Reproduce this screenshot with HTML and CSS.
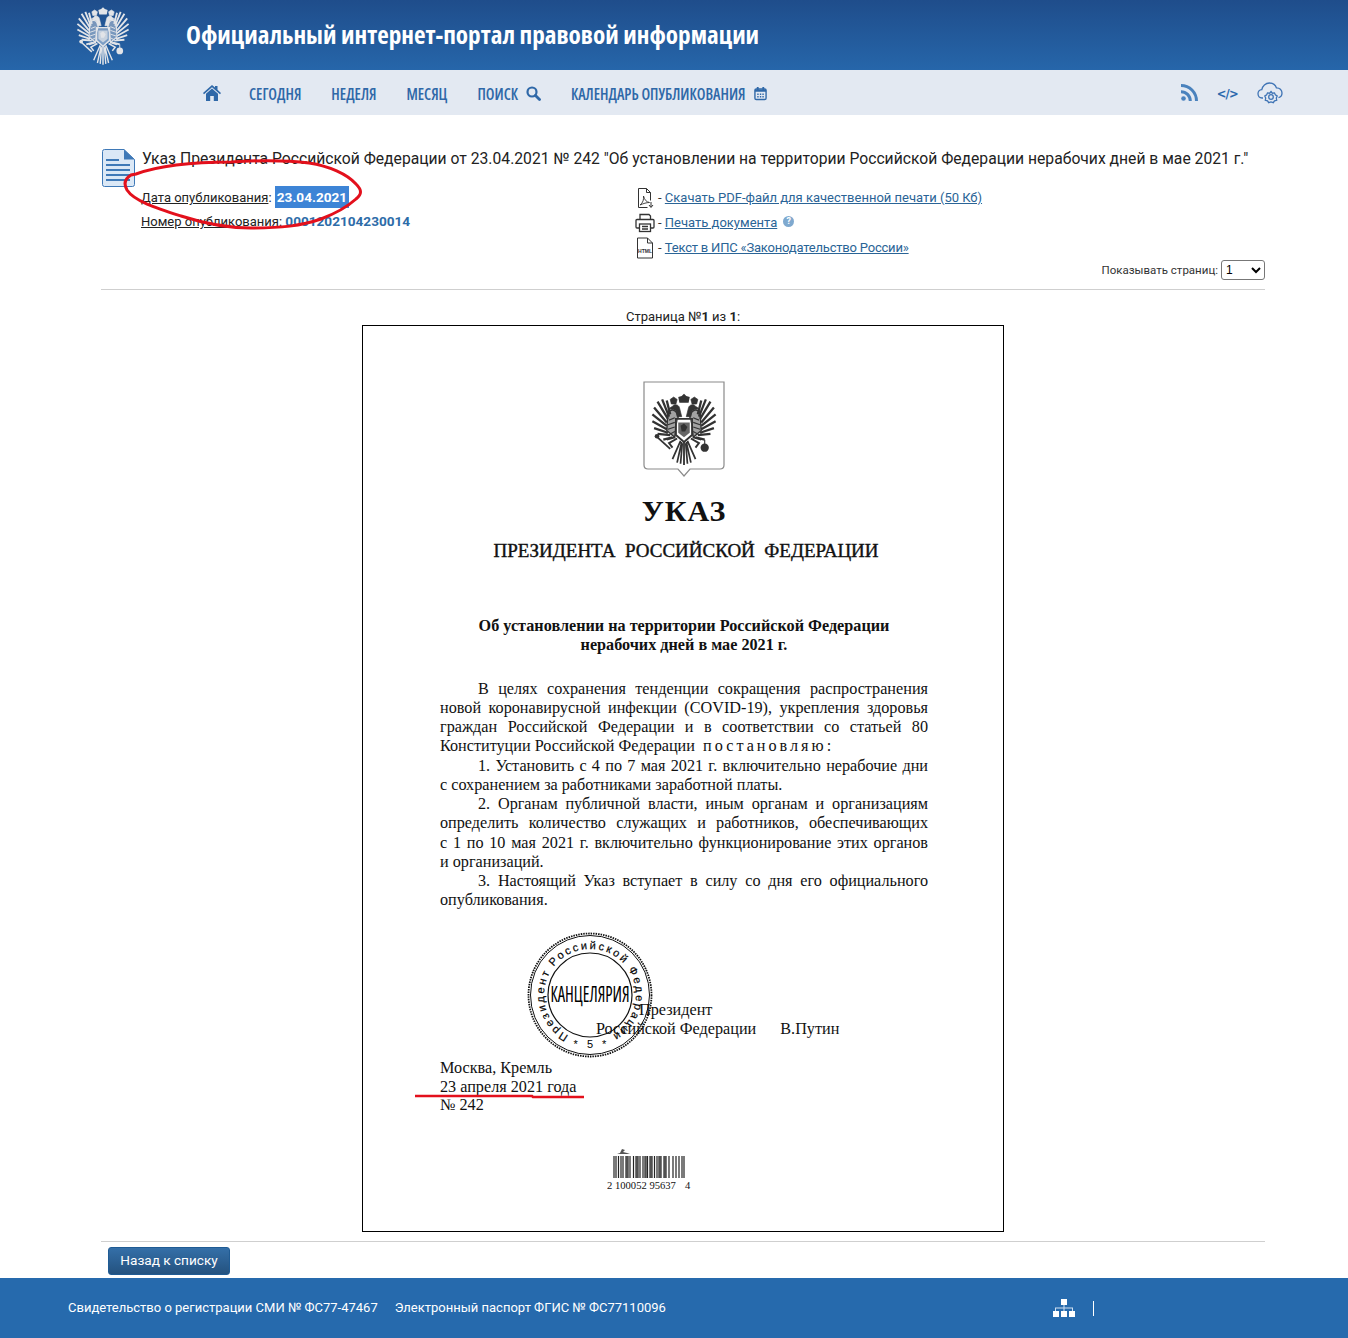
FILE: index.html
```html
<!DOCTYPE html>
<html lang="ru">
<head>
    <meta charset="UTF-8">
    <title>Официальный интернет-портал правовой информации</title>
    <link rel="stylesheet" href="styles.css">
</head>
<body>
    <svg width="0" height="0" class="defs">
        <defs>
            <g id="half-eagle" fill="none" stroke="currentColor">
                <path d="M12 -11L15 -23M13 -9L19 -24M14 -7L23 -22M15 -4L26 -17M15 -1L27.500 -11M15 2L27.500 -5M14 5L26 1M12 7L23 6M10 9L18 11" stroke-width="2"/>
                <path d="M5 -9C7 -16 12 -16 14 -12L15 3L8 9L7 -2z" fill="currentColor" fill-opacity=".45" stroke-width="1.200"/>
                <path d="M8 -8L13 -6M8 -4L14 -2M8 0L14 2M8 4L12 6" stroke-width="1"/>
                <path d="M2 -9L4 -17C5 -20 9 -20 10 -18L13 -16L9 -15L7 -14L6 -9z" fill="currentColor" stroke-width=".6"/>
                <path d="M6 -24l3-2 3 2-1 4h-4z" fill="currentColor" stroke-width=".6"/>
                <path d="M2 13L6 31M3 12L10 28M1.500 14L3 32" stroke-width="1.500"/>
                <path d="M6 10L13 14L10 18M8 9L15 11" stroke-width="1.700"/>
            </g>
            <g id="eagle">
                <use href="#half-eagle"/>
                <use href="#half-eagle" transform="scale(-1 1)"/>
                <path d="M0 -29l2 2 3 1-1 5h-8l-1-5 3-1z" fill="currentColor"/>
                <path d="M-7 -7H7V7L0 13L-7 7Z" fill="#fff" fill-opacity=".4" stroke="currentColor" stroke-width="1.600"/>
                <path d="M-5 -4H5V5L0 9L-5 5Z" fill="currentColor" fill-opacity=".75"/>
                <path d="M-3 -1l3-2 3 3-2 4h-3z" fill="currentColor"/>
                <path d="M0 13V33" stroke="currentColor" stroke-width="1.600"/>
                <path d="M-23 9L-12 19" stroke="currentColor" stroke-width="1.600"/>
                <circle cx="-23.500" cy="8" r="2" fill="currentColor"/>
                <circle cx="18" cy="18" r="3.600" fill="currentColor"/>
                <path d="M18 11v4" stroke="currentColor"/>
            </g>
        </defs>
    </svg>

    <header class="top">
        <svg class="top-eagle" viewBox="-29 -30 58 64" width="54" height="60"><use href="#eagle"/></svg>
        <div class="site-title">Официальный интернет-портал правовой информации</div>
    </header>

    <nav class="nav">
        <div class="nav-left">
            <a class="home" href="#"><svg viewBox="0 0 18 16" width="18" height="16"><path d="M9 0l3 2.600V1h2.500v3.800L18 8l-1 1.200-8-7-8 7L0 8z"/><path d="M9 3.500l6 5.200V16h-4.200v-5H7.200v5H3V8.700z"/></svg></a>
            <a href="#">СЕГОДНЯ</a>
            <a href="#">НЕДЕЛЯ</a>
            <a href="#">МЕСЯЦ</a>
            <a href="#" class="with-icon">ПОИСК <svg viewBox="0 0 15 15" width="15" height="15"><circle cx="6" cy="6" r="4.500" fill="none" stroke="currentColor" stroke-width="2.200"/><path d="M9.500 9.500l4 4" stroke="currentColor" stroke-width="2.800" stroke-linecap="round"/></svg></a>
            <a href="#" class="with-icon">КАЛЕНДАРЬ ОПУБЛИКОВАНИЯ <svg viewBox="0 0 14 15" width="13" height="15"><rect x="1" y="2.500" width="12" height="11.500" rx="1.500" fill="none" stroke="currentColor" stroke-width="1.500"/><path d="M1 3h12v2.500H1zM3 .5h2v3H3zM9 .5h2v3H9zM3.500 7.500h1.500V9H3.500zM6.300 7.500h1.500V9H6.300zM9 7.500h1.500V9H9zM3.500 10.300h1.500v1.500H3.500zM6.300 10.300h1.500v1.500H6.300zM9 10.300h1.500v1.500H9z"/></svg></a>
        </div>
        <div class="nav-right">
            <svg viewBox="0 0 17 17" width="17" height="17"><circle cx="2.500" cy="14.500" r="2.300" fill="#4a82bd"/><path d="M0 6.200a10.800 10.800 0 0 1 10.800 10.800h-3A7.800 7.800 0 0 0 0 9.200zM0 0a17 17 0 0 1 17 17h-3A14 14 0 0 0 0 3z" fill="#4a82bd"/></svg>
            <span class="code-tag">&lt;/&gt;</span>
            <svg viewBox="0 0 26 24" width="26" height="24" fill="none" stroke="#3f74b5" stroke-width="1.300"><path d="M6 17H5C2.500 17 1 15 1 12.800c0-2.200 1.600-4 3.800-4.200C5.400 5 8.600 2 12.400 2c3.300 0 6 2 7 4.800 3.200-.2 5.600 2.200 5.600 5.200 0 2.500-1.600 4.200-3.500 4.700"/><circle cx="14" cy="16" r="2.300"/><path d="M14 10.500l1.300 1.700 2.200-.3.900 2 1.800 1.200-.9 2 .4 2.200-2.200.6-1.200 1.800-2.300-.7-2.300.7-1.200-1.800-2.200-.6.400-2.200-.9-2 1.800-1.200.9-2 2.200.3z"/></svg>
        </div>
    </nav>

    <main class="main">
        <div class="doc-head">
            <svg class="doc-icon" viewBox="0 0 34 38" width="34" height="38"><path d="M1.500 2.500a2 2 0 0 1 2-2H23l10.500 10v25a2 2 0 0 1-2 2h-28a2 2 0 0 1-2-2z" fill="#dbe8f6" stroke="#3f79b7"/><path d="M23 .5v10h10.500z" fill="#3f79b7"/><path d="M5 10h13v2H5zM5 15h24v2H5zM5 20h24v2H5zM5 25h24v2H5zM5 30h24v2H5z" fill="#3f79b7"/></svg>
            <div class="doc-title">Указ Президента Российской Федерации от 23.04.2021 № 242 "Об установлении на территории Российской Федерации нерабочих дней в мае 2021 г."</div>
        </div>

        <div class="doc-meta">
            <div class="meta-left">
                <div class="meta-row meta-date"><a href="#">Дата опубликования</a>: <b class="date-mark">23.04.2021</b></div>
                <div class="meta-row"><a href="#">Номер опубликования</a>: <b class="pub-num">0001202104230014</b></div>
            </div>
            <div class="meta-right">
                <div class="link-row">
                    <svg viewBox="0 0 20 22" width="20" height="22" fill="none" stroke="#333"><path d="M3.500 20.500V1.500h8l4 4v8M11.500 1.500v4h4M3.500 20.500h9"/><path d="M5 18c3-2 4-6 3.500-9 1 4 3 6 6 6.500-3 0-6 1-9.500 2.500z" stroke-width=".9"/><path d="M16 15v5M14 18l2 2.500 2-2.500" stroke-width="1"/></svg>
                    <span>- <a href="#">Скачать PDF-файл для качественной печати (50 Кб)</a></span>
                </div>
                <div class="link-row">
                    <svg viewBox="0 0 20 20" width="20" height="20" fill="none" stroke="#333" stroke-width="1.300"><path d="M5 6V1.500h9l1.500 1.500v3M4.500 15H2a1 1 0 0 1-1-1V7.500a1 1 0 0 1 1-1h16a1 1 0 0 1 1 1V14a1 1 0 0 1-1 1h-2.500"/><rect x="4.500" y="11" width="11" height="7.500"/><path d="M7 13.500h6M7 16h6"/></svg>
                    <span>- <a href="#">Печать документа</a></span>
                    <i class="help">?</i>
                </div>
                <div class="link-row">
                    <svg viewBox="0 0 20 22" width="20" height="22" fill="none" stroke="#333"><path d="M2.500 21V1h10l5 5v15zM12.500 1v5h5"/><text x="10" y="15.500" class="html-label">HTML</text></svg>
                    <span>- <a href="#" class="ips-link">Текст в ИПС «Законодательство России»</a></span>
                </div>
            </div>
        </div>

        <div class="pages-row">
            <label>Показывать страниц:</label>
            <select class="pages-select"><option>1</option></select>
        </div>

        <div class="page-no">Страница №<b>1</b> из <b>1</b>:</div>

        <div class="paper">
            <svg class="emblem" viewBox="0 0 82 98" width="82" height="98">
                <path d="M1 1h80v83c0 3-2 4-4 4H47l-6 7-6-7H5c-2 0-4-1-4-4z" fill="#fff" stroke="#8a8a8a" stroke-width="1.200"/>
                <g transform="translate(41 46) scale(1.150)"><use href="#eagle"/></g>
            </svg>
            <div class="ukaz">УКАЗ</div>
            <div class="ukaz-sub">ПРЕЗИДЕНТА&nbsp; РОССИЙСКОЙ&nbsp; ФЕДЕРАЦИИ</div>
            <div class="decree-title">
                <div>Об установлении на территории Российской Федерации</div>
                <div>нерабочих дней в мае 2021 г.</div>
            </div>
            <div class="decree-body">
                <div class="ln in">В целях сохранения тенденции сокращения распространения</div>
                <div class="ln">новой коронавирусной инфекции (COVID-19), укрепления здоровья</div>
                <div class="ln">граждан Российской Федерации и в соответствии со статьей 80</div>
                <div class="ln end">Конституции Российской Федерации&nbsp; <span class="spaced">постановляю</span>:</div>
                <div class="ln in">1. Установить с 4 по 7 мая 2021 г. включительно нерабочие дни</div>
                <div class="ln end">с сохранением за работниками заработной платы.</div>
                <div class="ln in">2. Органам публичной власти, иным органам и организациям</div>
                <div class="ln">определить количество служащих и работников, обеспечивающих</div>
                <div class="ln">с 1 по 10 мая 2021 г. включительно функционирование этих органов</div>
                <div class="ln end">и организаций.</div>
                <div class="ln in">3. Настоящий Указ вступает в силу со дня его официального</div>
                <div class="ln end">опубликования.</div>
            </div>
            <div class="signature">
                <div class="sign-post">
                    <div class="sign-first">Президент</div>
                    <div>Российской Федерации</div>
                </div>
                <div class="sign-name">В.Путин</div>
                <svg class="stamp" viewBox="0 0 126 126" width="126" height="126">
                    <circle cx="63" cy="63" r="61.500" fill="none" stroke="#111" stroke-width="1.800" stroke-dasharray="1.500 1"/>
                    <circle cx="63" cy="63" r="59.500" fill="none" stroke="#111"/>
                    <circle cx="63" cy="63" r="42" fill="none" stroke="#111" stroke-width="1.200"/>
                    <path id="stampRing" d="M41.400 103.600A46 46 0 1 1 82.400 104.700" fill="none"/>
                    <text class="stamp-ring"><textPath href="#stampRing" textLength="242">Президент Российской Федерации</textPath></text>
                    <text x="63" y="116" class="stamp-star">* 5 *</text>
                    <text x="63" y="70" class="stamp-title" textLength="79" lengthAdjust="spacingAndGlyphs">КАНЦЕЛЯРИЯ</text>
                </svg>
            </div>
            <div class="place">
                <div>Москва, Кремль</div>
                <div>23 апреля 2021 года</div>
                <div>№ 242</div>
            </div>
            <svg class="barcode" viewBox="0 0 84 46" width="84" height="46">
                <path d="M10 8l3-1 2-4 3 1-2 2 4 1 3 1H8z" fill="#555"/>
                <path d="M7 10v22M9 10v22M11.500 10v22M14 10v22M16 10v22M19 10v22M21 10v22M23 10v22M26.500 10v22M29 10v22M31 10v22M33 10v22M36 10v22M38 10v22M40.500 10v22M43 10v22M45 10v22M47.500 10v22M50 10v22M52 10v22M54 10v22M57 10v22M59 10v22M62 10v22M66 10v22M69 10v22M72 10v22M75 10v22M77 10v22" stroke="#222" stroke-width="1.200"/>
                <path d="M20 10v22M30 10v22M39 10v22M44 10v22M53 10v22M58 10v22" stroke="#444" stroke-width="1.500"/>
                <text x="0" y="43" class="barcode-num">2 100052 95637</text>
                <text x="78" y="43" class="barcode-num">4</text>
            </svg>
        </div>

        <div class="bottom-bar">
            <a class="back-btn" href="#">Назад к списку</a>
        </div>
    </main>

    <footer class="footer">
        <div class="footer-text">
            <span>Свидетельство о регистрации СМИ № ФС77-47467</span>
            <span>Электронный паспорт ФГИС № ФС77110096</span>
        </div>
        <div class="footer-icons">
            <svg viewBox="0 0 22 18" width="22" height="18" fill="#fff"><rect x="8" y="0" width="6" height="6"/><rect x="0" y="12" width="6" height="6"/><rect x="8" y="12" width="6" height="6"/><rect x="16" y="12" width="6" height="6"/><path d="M10.500 6h1v2.500H20V12h-1V9.500h-7.500V12h-1V9.500H3V12H2V8.500h8.500z" fill="#cfe0f2"/></svg>
            <span class="footer-sep"></span>
        </div>
    </footer>

    <svg class="marks" viewBox="0 0 1348 1338" width="1348" height="1338" fill="none" stroke="#e3101c">
        <path stroke-width="3" d="M136 174c22-8 55-12 95-12 30-2 55-2 78 1 20 3 38 11 47 21 6 6 6 10 0 15-10 9-22 15-35 20-20 7-40 9-70 9-25 0-45-4-70-12-25-8-47-15-54-26-4-7-1-12 4-15z"/>
        <path stroke-width="2.500" d="M415 1096h117l1 1h51"/>
    </svg>
</body>
</html>
```
FILE: styles.css
```css
* {
    box-sizing: border-box;
}

body {
    margin: 0;
    width: 1348px;
    height: 1338px;
    overflow: hidden;
    position: relative;
    background: #fff;
    font-family: Roboto, "Noto Sans", sans-serif;
    font-size: 13px;
    color: #222;
}

.defs {
    position: absolute;
}

.top {
    height: 70px;
    display: flex;
    align-items: center;
    padding-left: 76px;
    background: linear-gradient(#1f4d8b, #2666aa);
}

.top-eagle {
    color: #e2e4e8;
    flex: none;
    margin-top: 2px;
}

.site-title {
    margin-left: 56px;
    margin-top: -3px;
    color: #fff;
    font-family: "Open Sans", sans-serif;
    font-stretch: 75%;
    font-weight: bold;
    font-size: 25.200px;
}

.nav {
    height: 45px;
    background: #e3e9f2;
    display: flex;
    align-items: center;
    justify-content: space-between;
    padding: 0 65px 0 203px;
}

.nav-left {
    display: flex;
    align-items: center;
    gap: 30px;
}

.nav a {
    color: #2f68a8;
    font-family: "Open Sans", sans-serif;
    font-stretch: 75%;
    font-weight: 600;
    font-size: 15.300px;
    margin-top: 2px;
    text-decoration: none;
    fill: currentColor;
}

.nav .home {
    display: flex;
    margin-right: -2px;
    margin-top: 0;
}

.with-icon {
    display: flex;
    align-items: center;
    gap: 8px;
}

.nav-right {
    display: flex;
    align-items: center;
    gap: 19px;
}

.code-tag {
    color: #2a68ad;
    font-family: "DejaVu Sans", sans-serif;
    font-weight: bold;
    font-size: 11.500px;
    letter-spacing: -.7px;
    margin-top: 2px;
}

.main {
    padding: 0 83px 0 101px;
}

.doc-head {
    display: flex;
    align-items: flex-start;
    padding-top: 34px;
}

.doc-icon {
    flex: none;
}

.doc-title {
    margin-left: 7px;
    white-space: nowrap;
    font-size: 15.700px;
    line-height: 20px;
    color: #222;
}

.doc-meta {
    display: flex;
    margin-top: -2px;
}

.meta-left {
    width: 534px;
    padding-left: 40px;
}

.meta-row {
    height: 24px;
    line-height: 22px;
    font-size: 13px;
}

.meta-row a {
    color: #222;
}

.meta-date {
    margin-top: 1px;
    height: 24px;
}

.date-mark {
    background: #3d84d6;
    color: #fff;
    font-size: 13.600px;
    padding: 3px 2px;
}

.pub-num {
    color: #2d6ca8;
    font-size: 13.600px;
}

.link-row {
    height: 25px;
    display: flex;
    align-items: center;
    gap: 3px;
    font-size: 13px;
    color: #333;
}

.link-row a {
    color: #2a6496;
}

.link-row .ips-link {
    letter-spacing: -.2px;
}

.html-label {
    font-family: "Liberation Sans", sans-serif;
    font-size: 5px;
    font-weight: bold;
    text-anchor: middle;
    fill: #333;
    stroke: none;
}

.help {
    width: 11px;
    height: 11px;
    margin-left: 3px;
    margin-top: -2px;
    border-radius: 50%;
    background: #7fa9cf;
    color: #fff;
    font-size: 9px;
    font-style: normal;
    font-weight: bold;
    line-height: 11px;
    text-align: center;
}

.pages-row {
    display: flex;
    justify-content: flex-end;
    align-items: center;
    gap: 3px;
    height: 30px;
    margin-top: 0;
    border-bottom: 1px solid #cfcfcf;
    padding-bottom: 9px;
    font-size: 11.500px;
    color: #333;
}

.pages-select {
    width: 44px;
    height: 20px;
    font-size: 12px;
    font-family: "Liberation Sans", sans-serif;
    background: #fff;
    border: 1px solid #777;
    border-radius: 3px;
}

.page-no {
    text-align: center;
    margin-top: 18px;
    height: 17px;
    line-height: 17px;
    font-size: 13px;
}

.paper {
    position: relative;
    width: 642px;
    height: 907px;
    margin-left: 261px;
    border: 1px solid #000;
    padding: 55px 75px 0 77px;
    font-family: "Liberation Serif", serif;
    font-size: 16.200px;
    line-height: 19.250px;
    color: #111;
}

.emblem {
    display: block;
    margin-left: 203px;
    color: #333;
}

.ukaz {
    text-align: center;
    font-size: 30px;
    font-weight: bold;
    line-height: 36px;
    letter-spacing: 1px;
    margin-top: 14px;
}

.ukaz-sub {
    text-align: center;
    font-size: 19px;
    line-height: 24px;
    margin-top: 10px;
    padding-left: 4px;
    font-weight: normal;
    -webkit-text-stroke: .4px #111;
}

.decree-title {
    margin-top: 54px;
    text-align: center;
    font-weight: bold;
}

.decree-body {
    margin-top: 24px;
}

.ln {
    text-align: justify;
    text-align-last: justify;
    white-space: nowrap;
}

.ln.in {
    padding-left: 38px;
}

.ln.end {
    text-align-last: left;
}

.spaced {
    letter-spacing: 3px;
}

.signature {
    display: flex;
    margin-top: 90px;
    padding-left: 156px;
    align-items: flex-end;
    position: relative;
}

.sign-first {
    padding-left: 43px;
}

.sign-name {
    margin-left: 24px;
}

.stamp {
    position: absolute;
    left: 87px;
    top: -69px;
}

.stamp-ring {
    font-family: "Liberation Sans", sans-serif;
    font-size: 11px;
    stroke: #111;
    stroke-width: .2px;
}

.stamp-star {
    font-family: "Liberation Sans", sans-serif;
    font-size: 11px;
    text-anchor: middle;
    word-spacing: 6px;
}

.stamp-title {
    font-family: "Open Sans", sans-serif;
    font-stretch: 75%;
    font-size: 22px;
    text-anchor: middle;
}

.place {
    margin-top: 20px;
    line-height: 18.700px;
}

.barcode {
    display: block;
    margin-left: 167px;
    margin-top: 31px;
}

.barcode-num {
    font-family: "Liberation Serif", serif;
    font-size: 10.600px;
    fill: #111;
}

.bottom-bar {
    margin-top: 9px;
    border-top: 1px solid #cfcfcf;
    padding: 5px 0 0 7px;
}

.back-btn {
    display: inline-block;
    width: 122px;
    height: 28px;
    line-height: 25px;
    text-align: center;
    border-radius: 3px;
    background: linear-gradient(#346fa8, #24527f);
    border: 1px solid #1f5b94;
    color: #fff;
    font-size: 13.600px;
    text-decoration: none;
}

.footer {
    position: absolute;
    left: 0;
    right: 0;
    bottom: 0;
    height: 60px;
    background: #266aad;
    display: flex;
    align-items: center;
    padding: 0 0 2px 68px;
    color: #fff;
    font-size: 13px;
}

.footer-text {
    display: flex;
    gap: 17px;
    width: 985px;
}

.footer-icons {
    display: flex;
    align-items: center;
    gap: 18px;
    margin-top: 2px;
}

.footer-sep {
    width: 1px;
    height: 15px;
    background: #fff;
}

.marks {
    position: absolute;
    left: 0;
    top: 0;
    pointer-events: none;
}
```
